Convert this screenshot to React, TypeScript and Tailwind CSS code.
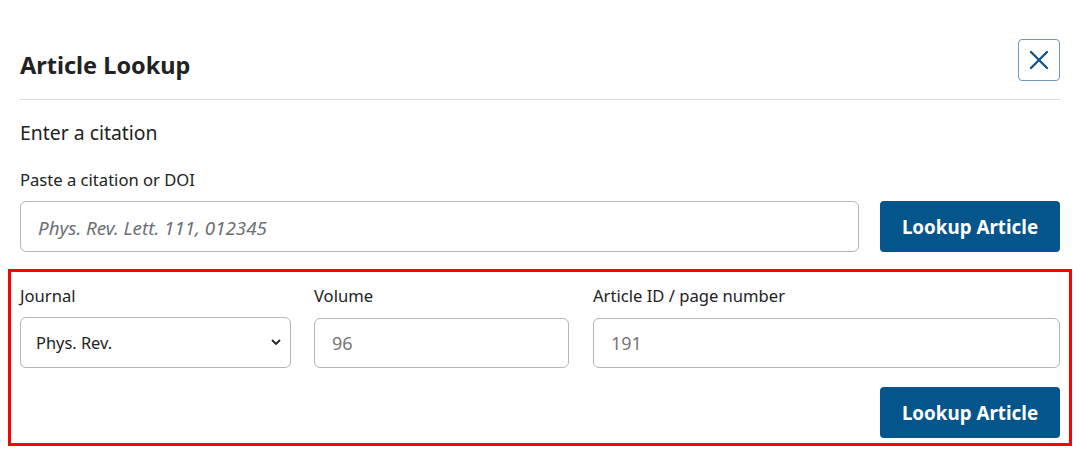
import React from "react";

export default function App() {
  return (
    <div className="w-[1080px] h-[450px] bg-white px-[20px] pt-[39px] text-[#333] font-['Noto_Sans','Open_Sans',sans-serif]">
      <div className="flex items-center justify-between h-[42px]">
        <h1 className="pt-[12px] text-[23.5px] font-bold text-[#222] leading-none">Article Lookup</h1>
        <button className="w-[42px] h-[42px] border border-[#6f9ac2] rounded-[4px] flex items-center justify-center">
          <svg width="22" height="22" viewBox="0 0 22 22" fill="none" stroke="#17568a" strokeWidth="2.4" strokeLinecap="round">
            <path d="M3 3 L19 19 M19 3 L3 19" />
          </svg>
        </button>
      </div>
      <div className="mt-[18px] h-[1px] bg-[#dcdcdc]" />
      <h2 className="mt-[21px] text-[19.4px] leading-[24px] text-[#222]">Enter a citation</h2>
      <label className="block mt-[25px] text-[16.6px] leading-[20px] text-[#222]">Paste a citation or DOI</label>
      <div className="mt-[11px] flex gap-[21px]">
        <input
          className="flex-1 h-[51px] border border-[#b5b5b5] rounded-[6px] px-[17px] pt-[2px] text-[18.8px] outline-none placeholder:italic placeholder:text-[#6b6f75]"
          placeholder="Phys. Rev. Lett. 111, 012345"
        />
        <button className="w-[180px] h-[51px] pt-[2px] rounded-[4px] bg-[#03558c] text-white text-[18.8px] font-bold">Lookup Article</button>
      </div>
      <div className="mt-[17px] -mx-[12px] border-[3px] border-[#ff0000] px-[9px] pt-[14px] pb-[5px]">
        <div className="grid grid-cols-[271px_256px_1fr] gap-x-[23px]">
          <div>
            <label className="block text-[16.6px] leading-[20px] text-[#222]">Journal</label>
            <div className="relative mt-[11px]">
              <select className="appearance-none w-full h-[51px] border border-[#b5b5b5] rounded-[6px] pl-[15px] pt-[1px] text-[16.4px] text-[#222] bg-white outline-none">
                <option>Phys. Rev.</option>
              </select>
              <svg className="absolute right-[10px] top-[22px] pointer-events-none" width="10" height="7" viewBox="0 0 10 7" fill="none" stroke="#222" strokeWidth="1.8">
                <path d="M1 1 L5 5 L9 1" />
              </svg>
            </div>
          </div>
          <div>
            <label className="block text-[16.6px] leading-[20px] text-[#222]">Volume</label>
            <input
              className="mt-[12px] w-[255px] h-[50px] border border-[#b5b5b5] rounded-[6px] px-[17px] text-[18px] outline-none placeholder:text-[#777]"
              placeholder="96"
            />
          </div>
          <div>
            <label className="block text-[16.6px] leading-[20px] text-[#222]">Article ID / page number</label>
            <input
              className="mt-[12px] w-full h-[50px] border border-[#b5b5b5] rounded-[6px] px-[17px] text-[18px] outline-none placeholder:text-[#777]"
              placeholder="191"
            />
          </div>
        </div>
        <div className="flex justify-end mt-[19px]">
          <button className="w-[180px] h-[51px] pt-[2px] rounded-[4px] bg-[#03558c] text-white text-[18.8px] font-bold">Lookup Article</button>
        </div>
      </div>
    </div>
  );
}
